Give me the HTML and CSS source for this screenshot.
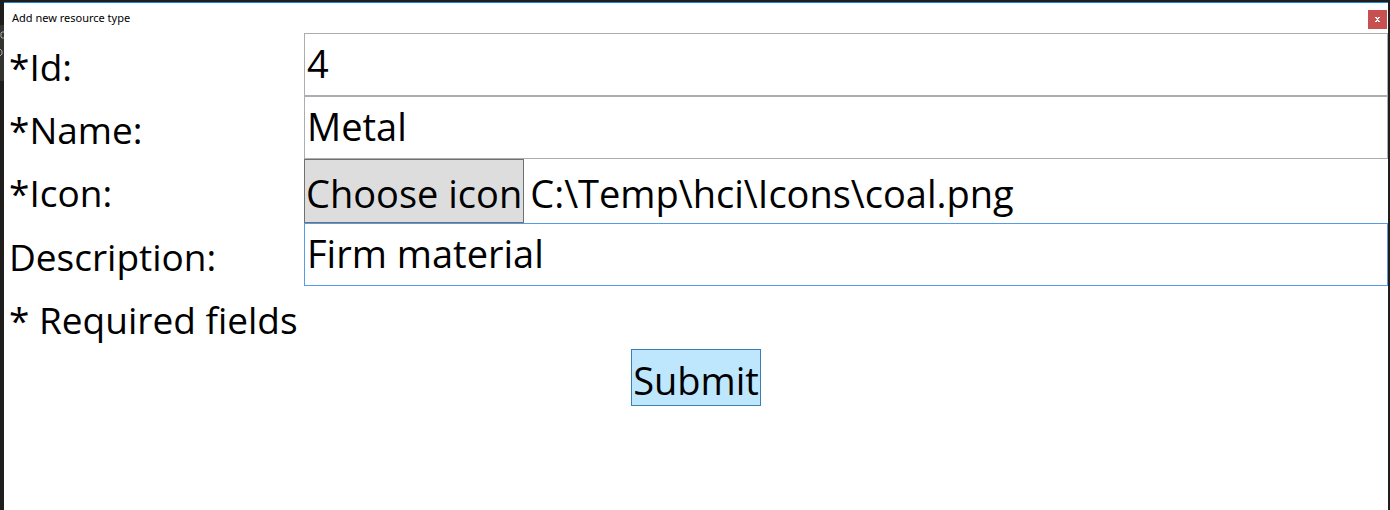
FILE: index.html
```html
<!DOCTYPE html>
<html lang="en">
<head>
<meta charset="utf-8">
<title>Add new resource type</title>
<link rel="stylesheet" href="styles.css">
</head>
<body>
<svg class="backdrop" width="4" height="56" viewBox="0 0 4 56" aria-hidden="true"><path fill="#333330" d="M0 0H4V56H0Z"/><path fill="none" stroke="#aaa" d="M4 7H2L1 8V12L2 13H4M0 24L2 26V29L0 31"/></svg>
<main class="window">
  <header class="titlebar">
    <h1 class="title">Add new resource type</h1>
    <button class="close" type="button" aria-label="Close"><svg viewBox="0 0 5 5" width="5" height="5" shape-rendering="crispEdges" aria-hidden="true"><path fill="#fff" d="M0 0H2V1H3V0H5V1H4V2H3V3H4V4H5V5H3V4H2V5H0V4H1V3H2V2H1V1H0Z"/></svg></button>
  </header>
  <form class="form">
    <label class="label" for="id">*Id:</label>
    <input class="field" id="id" type="text" value="4">
    <label class="label" for="name">*Name:</label>
    <input class="field" id="name" type="text" value="Metal">
    <label class="label" for="icon">*Icon:</label>
    <div class="picker">
      <button class="choose" id="icon" type="button">Choose icon</button>
      <span class="path">C:\Temp\hci\Icons\coal.png</span>
    </div>
    <label class="label" for="description">Description:</label>
    <input class="field field-active" id="description" type="text" value="Firm material">
    <p class="label note">* Required fields</p>
    <button class="submit" type="submit">Submit</button>
  </form>
</main>
</body>
</html>
```
FILE: styles.css
```css
* { box-sizing: border-box; }
body {
  display: flex;
  min-height: 100vh;
  margin: 0;
  padding: 2px 2px 0 4px;
  background: #1f1e1c;
  color: #000;
  font-family: "Segoe UI", "Open Sans", "Noto Sans", sans-serif;
}
.backdrop { position: absolute; top: 25px; left: 0; }
.window {
  flex: 1;
  border-top: 1px solid #1883d7;
  background: #fff;
}
.titlebar {
  display: flex;
  align-items: center;
  justify-content: space-between;
  height: 30px;
  padding: 2px 1px 0 8px;
}
.title {
  margin: 0;
  padding-bottom: 3px;
  font-family: "Segoe UI", "Noto Sans", sans-serif;
  font-size: 11px;
  font-weight: 400;
}
.close {
  display: grid;
  place-items: center;
  width: 19px;
  height: 19px;
  padding: 0;
  border: 0;
  background: #c75050;
}
.form {
  display: grid;
  grid-template-columns: 300px 1fr;
  grid-template-rows: 63px 63px 64px 63px 63px auto;
  font-size: 38px;
}
.label {
  margin: 0;
  padding: 8px 0 0 5px;
  font-size: 37px;
  line-height: 52px;
  white-space: nowrap;
}
.field {
  width: 100%;
  height: 63px;
  padding: 0 2px 4px;
  border: 1px solid #abadb3;
  border-radius: 0;
  outline: 0;
  font: inherit;
}
.field-active { border-color: #569de5; }
.picker { display: flex; }
.choose, .submit {
  padding: 0 1px;
  border: 1px solid #707070;
  background: #ddd;
  color: #000;
  font: inherit;
  line-height: 52px;
  white-space: nowrap;
}
.choose { padding-top: 4px; }
.path { padding: 8px 0 0 6px; line-height: 52px; }
.note { grid-column: 1 / -1; }
.submit {
  grid-column: 1 / -1;
  justify-self: center;
  height: 57px;
  padding-top: 4px;
  border-color: #3c7fb1;
  background: #bee6fd;
}
```
